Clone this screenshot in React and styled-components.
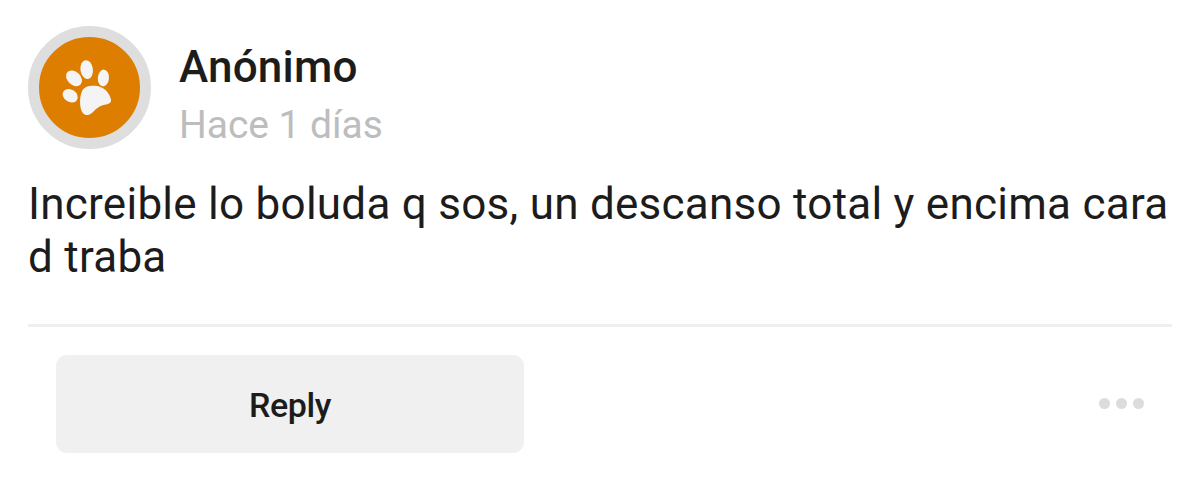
import styled, {createGlobalStyle} from 'styled-components';

export default function App() {
  return (
    <>
      <GlobalStyle />
      <Comment>
        <Header>
          <Avatar>
            <PawIcon />
          </Avatar>
          <Author>
            <Name>Anónimo</Name>
            <Time>Hace 1 días</Time>
          </Author>
        </Header>
        <Message>
          Increible lo boluda q sos, un descanso total y encima cara d traba
        </Message>
        <Footer>
          <ReplyButton>Reply</ReplyButton>
          <MoreButton aria-label="More">
            <Dot />
            <Dot />
            <Dot />
          </MoreButton>
        </Footer>
      </Comment>
    </>
  );
}

function PawIcon() {
  return (
    <svg width="101" height="101" viewBox="0 0 101 101" fill="#f4f4f4">
      <ellipse cx="47.700" cy="32.600" rx="6.200" ry="9.500" transform="rotate(-8 47.700 32.600)" />
      <ellipse cx="64.400" cy="41" rx="5.600" ry="8.400" transform="rotate(5 64.400 41)" />
      <ellipse cx="35" cy="41.300" rx="6.600" ry="9.100" transform="rotate(-46 35 41.300)" />
      <ellipse cx="31.200" cy="58.700" rx="6.200" ry="8" transform="rotate(-56 31.200 58.700)" />
      <path d="M52.500 48.700C59 48.300 64.500 50.300 67.700 54.300C70.300 57.300 72.300 61.300 72 64C71.500 67 68 67.200 64.500 68C60.500 69 57.500 71.300 54.500 74.500C52 77 50.500 78.300 47.500 78C43.500 77.700 41.700 73 41.200 68C40.800 63.500 41.200 58.500 42.700 55C44.500 50.800 47.500 49 52.500 48.700Z" />
    </svg>
  );
}

const GlobalStyle = createGlobalStyle`
  * {
    box-sizing: border-box;
  }
  body {
    background: #fff;
    color: #1c1c1c;
    font-family: Roboto, sans-serif;
    margin: 0;
  }
`;
const Comment = styled.article`
  height: 481px;
  padding: 26px 28px 0;
  width: 1200px;
`;
const Header = styled.header`
  display: flex;
  height: 123px;
`;
const Avatar = styled.div`
  align-items: center;
  background: #dd7e00;
  border: 11px solid #dedede;
  border-radius: 50%;
  display: flex;
  height: 123px;
  justify-content: center;
  width: 123px;
`;
const Author = styled.div`
  margin-left: 28px;
  padding-top: 14px;
`;
const Name = styled.h2`
  font-size: 44px;
  font-weight: 500;
  letter-spacing: 0.2px;
  line-height: 54px;
  margin: 0;
`;
const Time = styled.time`
  color: #bdbdbd;
  display: block;
  font-size: 39px;
  letter-spacing: -0.05px;
  line-height: 62px;
`;
const Message = styled.p`
  font-size: 44px;
  letter-spacing: 0.26px;
  line-height: 53px;
  margin: 29px 0 0;
`;
const Footer = styled.footer`
  align-items: center;
  border-top: 3px solid #efefef;
  display: flex;
  justify-content: space-between;
  margin-top: 40px;
  padding: 28px 28px 0;
`;
const ReplyButton = styled.button`
  background: #f0f0f0;
  border: 0;
  border-radius: 11px;
  color: #1c1c1c;
  font-family: inherit;
  font-size: 34px;
  font-weight: 500;
  height: 98px;
  letter-spacing: -0.45px;
  padding: 2px 0 0;
  width: 468px;
`;
const MoreButton = styled.button`
  background: none;
  border: 0;
  display: flex;
  gap: 6px;
  padding: 0 0 2px;
`;
const Dot = styled.span`
  background: #dcdcdc;
  border-radius: 50%;
  height: 11px;
  width: 11px;
`;
